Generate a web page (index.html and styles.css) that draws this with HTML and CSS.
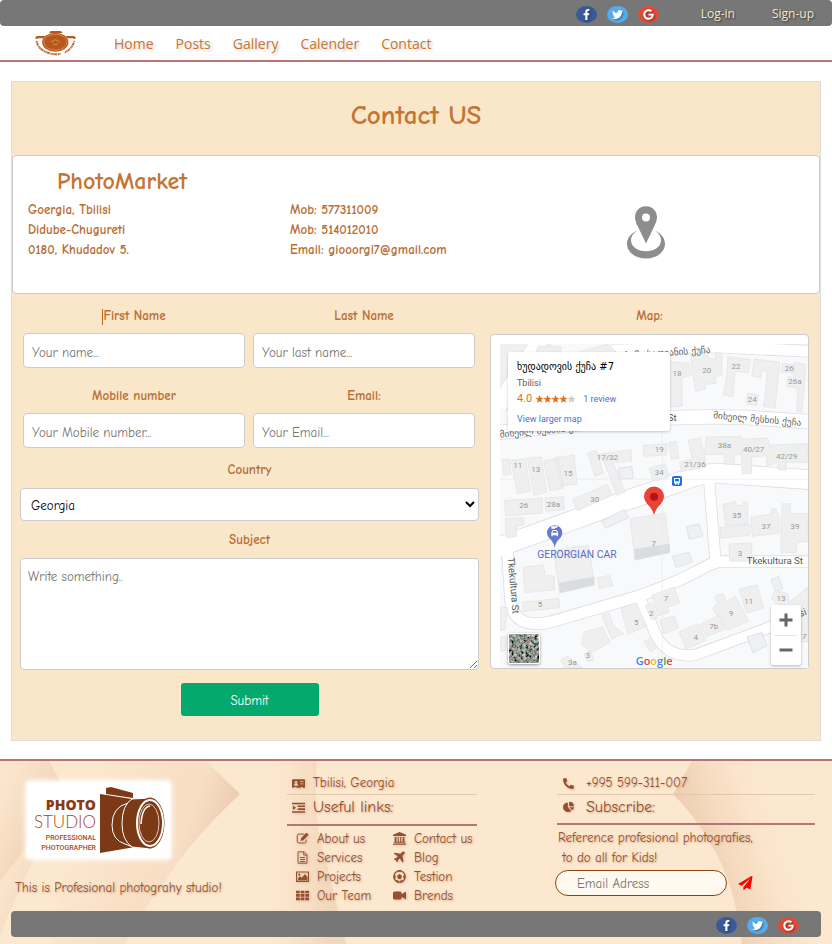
FILE: index.html
```html
<!DOCTYPE html>
<html lang="en">
<head>
<meta charset="utf-8">
<meta name="viewport" content="width=device-width, initial-scale=1">
<title>PhotoMarket - Contact</title>
<link rel="stylesheet" href="styles.css">
</head>
<body>
<svg class="defs" width="0" height="0" aria-hidden="true">
  <symbol id="i-fb" viewBox="0 0 320 512"><path d="M279.14 288l14.22-92.66h-88.91v-60.13c0-25.35 12.42-50.06 52.24-50.06h40.42V6.26S260.43 0 225.36 0c-73.22 0-121.08 44.38-121.08 124.72v70.62H22.89V288h81.39v224h100.17V288z"/></symbol>
  <symbol id="i-tw" viewBox="0 0 512 512"><path d="M459.37 151.716c.325 4.548.325 9.097.325 13.645 0 138.72-105.583 298.558-298.558 298.558-59.452 0-114.68-17.219-161.137-47.106 8.447.974 16.568 1.299 25.34 1.299 49.055 0 94.213-16.568 130.274-44.832-46.132-.975-84.792-31.188-98.112-72.772 6.498.974 12.995 1.624 19.818 1.624 9.421 0 18.843-1.3 27.614-3.573-48.081-9.747-84.143-51.98-84.143-102.985v-1.299c13.969 7.797 30.214 12.67 47.431 13.319-28.264-18.843-46.781-51.005-46.781-87.391 0-19.492 5.197-37.36 14.294-52.954 51.655 63.675 129.3 105.258 216.365 109.807-1.624-7.797-2.599-15.918-2.599-24.04 0-57.828 46.782-104.934 104.934-104.934 30.213 0 57.502 12.67 76.67 33.137 23.715-4.548 46.456-13.32 66.599-25.34-7.798 24.366-24.366 44.833-46.132 57.827 21.117-2.273 41.584-8.122 60.426-16.243-14.292 20.791-32.161 39.308-52.628 54.253z"/></symbol>
  <symbol id="i-gg" viewBox="0 0 488 512"><path d="M488 261.8C488 403.3 391.1 504 248 504 110.8 504 0 393.2 0 256S110.8 8 248 8c66.8 0 123 24.5 166.3 64.9l-67.5 64.9C258.5 52.6 94.3 116.6 94.3 256c0 86.5 69.1 156.6 153.7 156.6 98.2 0 135-70.4 140.8-106.9H248v-85.3h236.1c2.3 12.7 3.9 24.9 3.9 41.4z"/></symbol>
</svg>

<header>
  <div class="bar topbar">
    <div class="social">
      <a class="fb" href="#" aria-label="Facebook"><svg><use href="#i-fb"/></svg></a>
      <a class="tw" href="#" aria-label="Twitter"><svg><use href="#i-tw"/></svg></a>
      <a class="gg" href="#" aria-label="Google"><svg><use href="#i-gg"/></svg></a>
    </div>
    <a class="auth" href="#">Log-in</a>
    <a class="auth" href="#">Sign-up</a>
  </div>
  <nav class="nav">
    <a class="brand" href="#" aria-label="Home page">
      <svg viewBox="0 0 123 76" fill="#b8591c">
        <path d="M43 4Q45 0 50 0H74Q79 0 82 4V6H43z"/>
        <path d="M0 22Q0 15 8 15H31L24 22H10L3 24zM123 22Q123 15 115 15H92L99 22H113L120 24z"/>
        <ellipse cx="61" cy="34" rx="40" ry="29"/>
        <ellipse cx="61" cy="34" rx="35" ry="24" fill="none" stroke="#eab68c" stroke-width="1.5"/>
        <path d="M48 34Q61 20 74 34M54 39Q61 44 68 39" fill="none" stroke="#e9a777" stroke-width="2"/>
        <path d="M4 30Q9 64 60 71Q107 70 119 30" fill="none" stroke="#c0703c" stroke-width="6" stroke-dasharray="5 1 9 2 4 1"/>
        <path d="M78 62L90 61L86 72L76 75z" fill="#fff"/>
      </svg>
    </a>
    <a href="#">Home</a>
    <a href="#">Posts</a>
    <a href="#">Gallery</a>
    <a href="#">Calender</a>
    <a href="#">Contact</a>
  </nav>
</header>

<main class="contact">
  <h1>Contact US</h1>
  <section class="info">
    <div class="address">
      <h2>PhotoMarket</h2>
      <p>Goergia, Tbilisi</p>
      <p>Didube-Chugureti</p>
      <p>0180, Khudadov 5.</p>
    </div>
    <div class="phones">
      <p>Mob: 577311009</p>
      <p>Mob: 514012010</p>
      <p>Email: giooorgi7@gmail.com</p>
    </div>
    <div class="pin">
      <svg viewBox="0 0 114 158" fill="#8d8d8b">
        <path fill-rule="evenodd" d="M57 0C38 0 24 14 24 33C24 42 29 54 33 62L57 112L81 62C85 54 90 42 90 33C90 14 76 0 57 0zM57 22a12 12 0 1 1 0 24a12 12 0 1 1 0-24z"/>
        <path d="M30 74C12 81 0 96 0 113C0 138 25 157 57 157C89 157 114 138 114 113C114 96 102 81 84 74C96 81 102 91 102 102C102 121 82 135 57 135C32 135 12 121 12 102C12 91 18 81 30 74z"/>
      </svg>
    </div>
  </section>

  <div class="columns">
    <form class="form">
      <div class="pair">
        <div class="field"><label for="fname"><span class="caret"></span>First Name</label><input id="fname" type="text" placeholder="Your name..."></div>
        <div class="field"><label for="lname">Last Name</label><input id="lname" type="text" placeholder="Your last name..."></div>
        <div class="field"><label for="mobile">Mobile number</label><input id="mobile" type="tel" placeholder="Your Mobile number..."></div>
        <div class="field"><label for="email">Email:</label><input id="email" type="email" placeholder="Your Email..."></div>
      </div>
      <label for="country">Country</label>
      <select id="country"><option>Georgia</option></select>
      <label for="subject">Subject</label>
      <textarea id="subject" placeholder="Write something.."></textarea>
      <button class="submit" type="submit">Submit</button>
    </form>

    <section class="mapcol">
      <h3>Map:</h3>
      <div class="mapbox">
        <div class="map">
          <svg class="canvas" viewBox="45 57 926 972" preserveAspectRatio="xMinYMin slice" aria-label="Street map">
            <rect x="45" y="57" width="1200" height="1200" fill="#f8f9fb"/>
            <path d="M45 57H205L130 150L45 220z" fill="#f0f0f0"/>
            <g class="road edge">
              <path d="M168 40L40 245" stroke-width="54"/>
              <path d="M380 76L700 66L1000 80" stroke-width="38"/>
              <path d="M30 324L300 295Q560 270 780 277L1000 292" stroke-width="46"/>
              <path d="M30 670L230 598L400 535L600 465Q660 440 720 446L1000 466" stroke-width="62"/>
              <path d="M672 460L692 715" stroke-width="36"/>
              <path d="M1000 710H710Q690 708 630 742Q560 780 455 815L200 890Q95 915 78 840L66 660" stroke-width="38"/>
              <path d="M463 815L515 935Q550 1000 630 990L860 905L1000 850" stroke-width="36"/>
            </g>
            <g class="road">
              <path d="M168 40L40 245" stroke-width="49"/>
              <path d="M380 76L700 66L1000 80" stroke-width="33"/>
              <path d="M30 324L300 295Q560 270 780 277L1000 292" stroke-width="41"/>
              <path d="M30 670L230 598L400 535L600 465Q660 440 720 446L1000 466" stroke-width="57"/>
              <path d="M672 460L692 715" stroke-width="31"/>
              <path d="M1000 710H710Q690 708 630 742Q560 780 455 815L200 890Q95 915 78 840L66 660" stroke-width="33"/>
              <path d="M463 815L515 935Q550 1000 630 990L860 905L1000 850" stroke-width="31"/>
            </g>
            <g class="bld">
              <path d="M160 62L230 66L225 90H150zM300 75L370 57L400 90H260z"/>
              <path d="M545 110L612 114L618 152L590 158L592 243L556 247z"/>
              <path d="M617 85L668 79L670 100L692 102V82L711 85V150L690 156L692 175L660 178L662 192L632 198L622 140z"/>
              <path d="M728 95L796 103L790 142L750 139L744 215L715 210L727 140z"/>
              <path d="M808 102L885 112L870 250L836 244L848 140L830 136L828 158L800 153z"/>
              <path d="M893 115L925 120V144L890 141zM908 155L925 157L928 112L960 118V165L950 262L935 258L938 190L905 184z"/>
              <path d="M788 204L820 210L816 242L785 236z"/>
              <path d="M52 404L73 402L78 448L56 451zM78 406L122 401L136 498L97 506zM127 400L169 396L185 502L147 511zM176 408L219 400L235 490L194 497zM210 398L268 390L276 478L228 482z"/>
              <path d="M308 384L334 376L356 444L330 454zM340 388L438 374L440 409L384 412L420 500L396 511L358 413z"/>
              <path d="M400 430L440 424L445 460L405 462z" class="soft"/>
              <path d="M474 361L545 356V390L476 394zM550 352L574 349L582 400L560 403z"/>
              <path d="M492 430L540 416L553 456L506 470zM609 346L646 338L660 400L663 426L588 440L584 412L622 402z"/>
              <path d="M664 336L768 334L772 342L849 340L852 360L970 356V412H903V436L880 434V412L846 422L844 392L800 396V446H771L770 388L748 390V418L720 416L718 388L658 388z"/>
              <path d="M58 527L172 519V565L62 572zM180 519L236 515L238 554L182 559zM262 524L366 478L383 510L278 557z"/>
              <path d="M60 580L116 578V600L94 604V635L64 638z"/>
              <path d="M350 588L418 553L430 578L362 610zM605 605L642 597L654 633L612 643z" class="soft"/>
              <path d="M435 581L541 565L554 680L450 705z"/>
              <path d="M448 672L554 656V684L449 706z" class="shade"/>
              <path d="M205 675L311 661L329 780L224 804z"/>
              <path d="M222 773L328 755V780L224 804z" class="shade"/>
              <path d="M562 694L613 682L622 711L574 727z" class="soft"/>
              <path d="M114 727L176 719L180 750L208 753V795L120 803zM336 758L374 751L383 782L344 791zM112 832L222 820L224 848L114 860z"/>
              <path d="M713 538L752 530L754 542L775 540V530L788 532V596L722 602zM705 608L795 598V630L707 640z"/>
              <path d="M797 577L858 567L860 552H872L882 574V624L802 634zM892 536H916V565L970 566V650L934 652V682L888 684V600zM732 657L800 654V708H734z"/>
              <path d="M858 765L880 755L893 790L872 799z" class="soft"/>
              <path d="M762 792L817 780L836 850L784 864zM690 813L714 805L724 830L752 814L790 888L728 916L704 884L682 850L698 835z"/>
              <path d="M646 898L702 870L720 912L664 935zM582 920L640 896L662 946L604 972z"/>
              <path d="M500 811L566 786L584 832L546 848L552 862L520 872zM524 885L568 872L580 910L536 926zM480 842L500 833L518 880L500 885zM408 850L452 832L486 904L428 928z"/>
              <path d="M350 870L372 864L386 902L416 926L380 942zM298 920L352 906L376 952L312 986L306 968L290 960zM476 950L500 938L516 968L496 980zM228 1005L250 994L294 1029H240zM297 986L318 980L326 1004L308 1010z"/>
              <path d="M786 936L830 922L846 962L804 984z" class="soft"/>
              <path d="M858 820L872 795L910 808V832L970 786V860H905zM45 845L68 848L60 916H45zM45 935H62V978H45zM948 875L970 860V950H948z"/>
            </g>
            <path d="M532 300V1029M45 463H971" stroke="#e9ebee" stroke-width="2"/>
            <g class="num">
              <text x="576" y="154">18</text><text x="665" y="143">20</text><text x="753" y="133">22</text><text x="913" y="137">26</text><text x="930" y="178">26a</text><text x="802" y="232">24</text>
              <text x="98" y="429">11</text><text x="152" y="441">13</text><text x="249" y="452">15</text><text x="367" y="406">17/32</text><text x="523" y="380">19</text><text x="523" y="449">34</text><text x="630" y="427">21/36</text><text x="718" y="369">38a</text><text x="806" y="380">40/27</text><text x="905" y="403">42/29</text>
              <text x="116" y="549">26</text><text x="205" y="547">28a</text><text x="329" y="532">30</text><text x="506" y="663">7</text><text x="755" y="580">35</text><text x="843" y="613">37</text><text x="930" y="613">39</text><text x="765" y="692">3</text>
              <text x="165" y="847">5</text><text x="543" y="827">7</text><text x="499" y="873">2</text><text x="454" y="899">5</text><text x="632" y="944">4</text><text x="686" y="912">7b</text><text x="738" y="874">9</text><text x="791" y="838">11</text><text x="888" y="827">13</text><text x="308" y="1000">3</text><text x="262" y="1020">3a</text><text x="958" y="942">7</text>
            </g>
            <g class="street">
              <text x="384" y="104" transform="rotate(-4 384 104)">შურამ ასათიანის ქუჩა</text>
              <text x="684" y="280" transform="rotate(5 684 280)">მიხეილ მესხის ქუჩა</text>
              <text x="45" y="338" transform="rotate(-5 45 338)">მიხეილ მესხის ქ.</text>
            </g>
            <g class="latin">
              <text x="548" y="287">St</text>
              <text x="785" y="716">Tkekultura St</text>
              <text x="68" y="698" transform="rotate(85 68 698)">Tkekultura St</text>
              <text x="946" y="876" transform="rotate(-20 946 876)">si</text>
            </g>
            <text class="car" x="157" y="700">GERORGIAN CAR</text>
            <path d="M209 668Q206 650 192 639A23 23 0 1 1 226 639Q212 650 209 668z" fill="#6878cb"/>
            <path fill-rule="evenodd" d="M199 634V623L203 615H215L219 623V634H215V631H203V634zM204 618L202 623H216L214 618zM199 604H210L212 602H217V608H212L210 607V611H199z" fill="#fff"/>
            <rect x="561" y="453" width="30" height="30" rx="5" fill="#1a73e8"/>
            <path d="M567 459H585V475H582V479H578V475H574V479H570V475H567z" fill="#fff"/><path d="M570 462H582V469H570z" fill="#1a73e8"/>
            <path d="M507 570Q503 552 486 536A30 30 0 1 1 528 536Q511 552 507 570z" fill="#ea4335"/>
            <circle cx="507" cy="515" r="12" fill="#b31412"/>
            <text class="google" x="452" y="1019"><tspan fill="#4285f4">G</tspan><tspan fill="#ea4335">o</tspan><tspan fill="#fbbc05">o</tspan><tspan fill="#4285f4">g</tspan><tspan fill="#34a853">l</tspan><tspan fill="#ea4335">e</tspan></text>
          </svg>
          <div class="place">
            <b>ხუდადოვის ქუჩა #7</b>
            <span>Tbilisi</span>
            <div class="rating">4.0
              <svg viewBox="0 0 60 12" fill="#e7711b"><defs><path id="star" d="M6 0L7.700 4.200L12 4.500L8.700 7.200L9.800 11.500L6 9.200L2.200 11.500L3.300 7.200L0 4.500L4.300 4.200z"/></defs><use href="#star"/><use href="#star" x="12"/><use href="#star" x="24"/><use href="#star" x="36"/><use href="#star" x="48" fill="#ccc"/></svg>
              <a href="#">1 review</a>
            </div>
            <a href="#">View larger map</a>
          </div>
          <button class="sat" type="button" aria-label="Satellite view">
            <svg viewBox="0 0 30 28"><filter id="noise" x="0" y="0" width="1" height="1"><feTurbulence type="fractalNoise" baseFrequency=".35" numOctaves="3" seed="7"/><feColorMatrix values="1.3 .4 0 0 -.58 1 .7 0 0 -.56 1 .6 .1 0 -.59 0 0 0 0 1"/></filter><rect width="30" height="28" filter="url(#noise)"/></svg>
          </button>
          <div class="zoom">
            <button type="button" aria-label="Zoom in"><svg viewBox="0 0 14 14"><path d="M5.500 0.500h3v5h5v3h-5v5h-3v-5h-5v-3h5z"/></svg></button>
            <button type="button" aria-label="Zoom out"><svg viewBox="0 0 14 14"><path d="M.5 5.500h13v3h-13z"/></svg></button>
          </div>
        </div>
      </div>
    </section>
  </div>
</main>

<footer class="footer">
  <svg class="waves" viewBox="0 0 832 183" preserveAspectRatio="none" aria-hidden="true">
    <defs>
      <linearGradient id="g1" gradientUnits="userSpaceOnUse" x1="90" y1="20" x2="232" y2="70"><stop offset="0" stop-color="#f0d0b2" stop-opacity="0"/><stop offset=".7" stop-color="#f4d8bd" stop-opacity=".6"/><stop offset="1" stop-color="#ebc8aa"/></linearGradient>
      <linearGradient id="g2" gradientUnits="userSpaceOnUse" x1="0" y1="0" x2="70" y2="30"><stop offset="0" stop-color="#f4d8bd" stop-opacity="0"/><stop offset="1" stop-color="#efd0b3"/></linearGradient>
      <linearGradient id="g3" gradientUnits="userSpaceOnUse" x1="275" y1="0" x2="330" y2="0"><stop offset="0" stop-color="#f4d8bd" stop-opacity="0"/><stop offset="1" stop-color="#f2d7bc"/></linearGradient>
      <linearGradient id="g4" gradientUnits="userSpaceOnUse" x1="683" y1="65" x2="765" y2="35"><stop offset="0" stop-color="#edccae"/><stop offset="1" stop-color="#f4d8bd" stop-opacity="0"/></linearGradient>
      <linearGradient id="g5" gradientUnits="userSpaceOnUse" x1="0" y1="90" x2="60" y2="110"><stop offset="0" stop-color="#f4d8bd" stop-opacity="0"/><stop offset="1" stop-color="#f0d1b4"/></linearGradient>
    </defs>
    <path fill="url(#g1)" d="M80 0H206L240 33Q190 80 165 120Q135 160 125 183H50z"/>
    <path fill="url(#g2)" d="M0 0H49L68 34L0 120z"/>
    <path fill="url(#g5)" d="M0 60L65 40Q25 110 0 175z"/>
    <path fill="url(#g3)" d="M275 0H317Q312 60 325 95Q336 140 346 183H275z"/>
    <path fill="url(#g4)" d="M692 0H832V183H742Q735 120 710 82Q695 55 673 33z"/>
  </svg>

  <div class="footgrid">
    <div class="about">
      <svg class="studio" viewBox="0 0 143 76" role="img" aria-label="Photo Studio">
        <g text-anchor="end">
          <text class="s1" x="69" y="28">PHOTO</text>
          <text class="s2" x="69" y="46">STUDIO</text>
          <text class="s3" x="69" y="58">PROFESSIONAL</text>
          <text class="s3" x="69" y="68">PHOTOGRAPHER</text>
        </g>
        <g fill="#7c3915" transform="translate(-2 -2)">
          <path d="M75 14L107 19L110 67L75 73z"/>
          <path d="M81 8L86 7L108 13V18L81 14z"/>
          <path d="M103 23Q87 27 87 45Q87 60 100 64Q118 72 125 66L128 20Q115 17 103 23z" stroke="#fff"/>
          <path d="M107 19L126 18V69L107 67Q97 60 97 44Q97 25 107 19z" stroke="#fff"/>
          <ellipse cx="125" cy="43" rx="14" ry="25" stroke="#7c3915"/>
          <ellipse cx="125" cy="43" rx="13" ry="23" fill="none" stroke="#fff" stroke-width="2"/>
          <ellipse cx="124" cy="43" rx="10" ry="19" fill="none" stroke="#e8c3ad"/>
          <path d="M116 44Q117 27 125 26" fill="none" stroke="#fff" stroke-width="1.500"/>
        </g>
      </svg>
      <p>This is Profesional photograhy studio!</p>
    </div>

    <div class="links">
      <p class="line"><svg class="ic" viewBox="0 0 18 16"><path fill-rule="evenodd" d="M1 2h16q1 0 1 1v10q0 1-1 1h-2v-1h-3v1H6v-1H3v1H1q-1 0-1-1V3q0-1 1-1zM5.500 4.500a2 2 0 1 0 .1 0zM2.500 11h6q0-3-3-3t-3 3zM11 5v1h5V5zM11 8v1h5V8z"/></svg>Tbilisi, Georgia</p>
      <h4><svg class="ic" viewBox="0 0 16 16"><path d="M0 2h16v2H0zM7 5.500h9v2H7zM7 9h9v2H7zM0 12.500h16v2H0zM1 5.500L5 8.250L1 11z"/></svg>Useful links:</h4>
      <ul>
        <li><a href="#"><svg class="ic" viewBox="0 0 16 16"><path d="M10.500 2.500H3.500Q1.500 2.500 1.500 4.500v7q0 2 2 2h7q2 0 2-2V9.500" fill="none" stroke="#94502f" stroke-width="1.200"/><path d="M5.500 11l.8-3.500L13 1L15.500 3.500L9 10.200z"/></svg>About us</a></li>
        <li><a href="#"><svg class="ic" viewBox="0 0 16 16"><path d="M8 0L16 3.500V5H0V3.500zM2 6h2.200v6H5.800V6H7.200v6H8.800V6h1.400v6h1.600V6H14v6h1v1.300H1V12h1zM0 14h16v1.600H0z"/></svg>Contact us</a></li>
        <li><a href="#"><svg class="ic" viewBox="0 0 16 16"><path d="M2.500 1H10l3.500 3.500V15h-11zM9.500 1v4h4M5 8h6M5 10.500h6M5 13h6" fill="none" stroke="#94502f" stroke-width="1.200"/></svg>Services</a></li>
        <li><a href="#"><svg class="ic" viewBox="0 0 16 16"><path d="M14 1q1 1 0 2.500L11.500 6L13 13l-1.500 1L8.500 9L6 11.500V13l-1 1l-1.500-2.500L1 10l1-1h1.500L6 6.500L1 3.500L2 2l7 1.500L11.500 1Q13 0 14 1z"/></svg>Blog</a></li>
        <li><a href="#"><svg class="ic" viewBox="0 0 16 16"><path d="M.7 2.500h14.600v11.500H.7z" fill="none" stroke="#94502f" stroke-width="1.400"/><path d="M2.500 12.500V10L5 7.500l2 2L11 5l3 3.500v4zM4 4.200a1.300 1.300 0 1 0 .1 0z"/></svg>Projects</a></li>
        <li><a href="#"><svg class="ic" viewBox="0 0 16 16"><circle cx="8" cy="8" r="7" fill="none" stroke="#94502f" stroke-width="1.500"/><path d="M8 5l3 2.200L9.800 11H6.200L5 7.200zM5.500 1L8 2.500L10.500 1V0h-5zM1 6l2.500 1L3 10L1 11zM15 6l-2.500 1l.5 3l2 1zM4.500 12.500L7 13v3L3 14zM11.500 12.500L9 13v3l4-2z"/></svg>Testion</a></li>
        <li><a href="#"><svg class="ic" viewBox="0 0 16 16"><path d="M0 2h4.600v3.300H0zM5.700 2h4.600v3.300H5.700zM11.400 2H16v3.300h-4.600zM0 6.300h4.600v3.300H0zM5.700 6.300h4.600v3.300H5.700zM11.400 6.300H16v3.300h-4.600zM0 10.600h4.600v3.300H0zM5.700 10.600h4.600v3.300H5.700zM11.400 10.600H16v3.300h-4.600z"/></svg>Our Team</a></li>
        <li><a href="#"><svg class="ic" viewBox="0 0 16 16"><path d="M2 3h6.500q2 0 2 2v1.500L16 3v10l-5.500-3.500V11q0 2-2 2H2q-2 0-2-2V5q0-2 2-2z"/></svg>Brends</a></li>
      </ul>
    </div>

    <div class="subscribe">
      <p class="line"><svg class="ic" viewBox="0 0 512 512"><path transform="translate(512 0) scale(-1 1)" d="M493.400 24.600l-104-24c-11.300-2.600-22.900 3.300-27.500 13.900l-48 112c-4.200 9.800-1.400 21.300 6.900 28l60.600 49.600c-36 76.700-98.900 140.500-177.200 177.200l-49.600-60.600c-6.800-8.300-18.200-11.100-28-6.900l-112 48C3.900 366.500-2 378.100.6 389.400l24 104C27.100 504.200 36.700 512 48 512c256.100 0 464-207.500 464-464 0-11.200-7.700-20.900-18.600-23.400z" class="phone"/></svg>+995 599-311-007</p>
      <h4><svg class="ic" viewBox="0 0 16 16"><path d="M7 2v7l5 5A7 7 0 1 1 7 2zM9 1a7 7 0 0 1 7 6.500H9zM9 9h7a7 7 0 0 1-2.500 4.500z"/></svg>Subscribe:</h4>
      <p class="note">Reference profesional photografies,</p>
      <p class="note">&nbsp;to do all for Kids!</p>
      <form class="mail">
        <input type="email" placeholder="Email Adress" aria-label="Email Adress">
        <button type="submit" aria-label="Send"><svg viewBox="0 0 512 512"><path d="M476 3.200L12.500 270.600c-18.100 10.400-15.800 35.600 2.200 43.200L121 358.400l287.300-253.200c5.500-4.900 13.300 2.600 8.600 8.300L176 407v80.500c0 23.600 28.500 32.900 42.500 15.800L282 426l124.600 52.200c14.200 6 30.400-2.900 33-18.200l72-432C515 7.800 493.300-6.800 476 3.200z"/></svg></button>
      </form>
    </div>
  </div>

  <div class="bar footbar">
    <div class="social">
      <a class="fb" href="#" aria-label="Facebook"><svg><use href="#i-fb"/></svg></a>
      <a class="tw" href="#" aria-label="Twitter"><svg><use href="#i-tw"/></svg></a>
      <a class="gg" href="#" aria-label="Google"><svg><use href="#i-gg"/></svg></a>
    </div>
  </div>
</footer>
</body>
</html>
```
FILE: styles.css
```css
* { box-sizing: border-box; }
body {
  margin: 0;
  background: #fff;
  font-family: "Comic Sans MS", "Comic Neue", Lato, sans-serif;
  font-size: 13px;
  line-height: 20px;
  color: #b86f35;
}
h1, h2, h3, h4, p, ul { margin: 0; padding: 0; font-weight: inherit; }
a { color: inherit; text-decoration: none; }
button, input, select, textarea { font: inherit; }
svg { display: block; }
.defs { position: absolute; }

/* Grey bars */
.bar {
  display: flex;
  align-items: center;
  justify-content: flex-end;
  height: 26px;
  border-radius: 4px;
  background: #777;
}
.topbar { padding: 2px 18px 0 0; font-family: "Segoe UI", "Open Sans", sans-serif; font-size: 12px; color: #fae6c9; }
.auth { margin-left: 37px; text-shadow: 1px 1px 2px #333; }
.topbar .social { margin-right: 5px; }
.social { display: flex; gap: 10px; }
.social a {
  display: flex;
  align-items: center;
  justify-content: center;
  width: 21px;
  height: 17px;
  border-radius: 50%;
}
.social svg { width: 11px; height: 11px; fill: #fff; filter: drop-shadow(1px 1px 1px #0006); }
.fb { background: #3b5998; }
.tw { background: #55acee; }
.gg { background: #dd4b39; }

/* Navigation */
.nav {
  display: flex;
  align-items: center;
  gap: 22px;
  height: 36px;
  padding: 1px 0 0 35px;
  border-bottom: 2px solid #b87474;
  font-family: "Segoe UI", "Open Sans", sans-serif;
  font-size: 14px;
  color: #c8762f;
}
.nav a { text-shadow: 2px 2px 3px #0003; }
.brand { margin-right: 16px; }
.brand svg { width: 41px; height: 25px; }

/* Contact panel */
.contact {
  margin: 19px 11px 18px;
  border: 1px solid #ddd;
  background: #fae6c9;
}
h1 { padding: 18px 0 23px; font-size: 27px; line-height: 32px; font-weight: bold; text-align: center; color: #c47532; }
.info {
  display: grid;
  grid-template-columns: 262px 1fr 346px;
  min-height: 139px;
  padding: 9px 0 0 15px;
  border: 1px solid #ccc;
  border-radius: 4px;
  background: #fff;
  font-weight: bold;
}
h2 { padding-left: 29px; margin-bottom: 3px; font-size: 24px; line-height: 32px; font-weight: bold; color: #c47532; }
.phones { padding-top: 35px; }
.pin { display: flex; justify-content: center; padding: 41px 0 0; }
.pin svg { width: 38px; height: 53px; }

.columns { display: grid; grid-template-columns: 459fr 319fr; gap: 11px; padding: 12px 11px 24px 8px; }
.form { display: flex; flex-direction: column; }
.form label, h3 { display: block; font-size: 13px; line-height: 20px; font-weight: bold; text-align: center; }
.pair { display: grid; grid-template-columns: 1fr 1fr; gap: 18px 8px; padding: 0 4px 0 3px; margin-bottom: 12px; }
.field label { margin-bottom: 7px; }
.caret { display: inline-block; height: 16px; border-left: 1px solid #b8642b; vertical-align: middle; }
.form input, .form select, .form textarea {
  display: block;
  width: 100%;
  border: 1px solid #ccc;
  border-radius: 4px;
  background: #fff;
  color: #000;
}
.form input { height: 35px; padding: 3px 8px 0; }
.form select { height: 33px; margin: 8px 0 9px; padding: 2px 6px 0; }
.form textarea { height: 112px; margin-top: 8px; padding: 8px 7px; resize: vertical; }
::placeholder { color: #757575; opacity: 1; }
.submit {
  align-self: center;
  width: 138px;
  height: 33px;
  margin-top: 13px;
  padding: 2px 0 0;
  border: 0;
  border-radius: 3px;
  background: #04aa6d;
  color: #fff;
}

/* Map */
.mapcol { display: flex; flex-direction: column; }
.mapbox {
  height: 335px;
  margin-top: 8px;
  padding: 9px 0 0 9px;
  border: 1px solid #ccc;
  border-radius: 4px;
  background: #fff;
}
.map { position: relative; height: 100%; overflow: hidden; font-family: Roboto, sans-serif; }
.canvas { width: 100%; height: 100%; }
.road path { fill: none; stroke: #fff; }
.road.edge path { stroke: #dcdfe5; }
.bld path { fill: #efefef; stroke: #e1e2e4; stroke-width: 2; }
.bld .soft { fill: #eef0f4; stroke: #d5d8dd; }
.bld .shade { fill: #dadde0; stroke: none; }
.num { font-size: 24px; fill: #999; text-anchor: middle; }
.street { font-family: "DejaVu Sans", sans-serif; font-size: 28px; fill: #666; }
.latin { font-size: 29px; fill: #555a60; }
.car { font-size: 31px; fill: #5c6bc0; }
.google { font-family: "Open Sans", sans-serif; font-size: 33px; font-weight: 600; }
.place {
  position: absolute;
  top: 8px;
  left: 8px;
  width: 162px;
  height: 79px;
  padding: 7px 9px;
  border-radius: 2px;
  background: #fff;
  box-shadow: 0 1px 3px #0003;
  font-size: 10px;
  line-height: 15px;
  color: #5b5b5b;
}
.place b { display: block; font: 10px/16px "DejaVu Sans", sans-serif; color: #000; white-space: nowrap; }
.place span { display: block; line-height: 17px; font-size: 9px; }
.place a { font-size: 9px; color: #4272db; }
.rating { display: flex; align-items: center; gap: 3px; margin-bottom: 5px; font-size: 11px; line-height: 14px; color: #e7711b; }
.rating svg { width: 41px; height: 8px; margin-right: 4px; }
.sat { position: absolute; left: 8px; bottom: 4px; width: 32px; height: 31px; padding: 0; border: 1px solid #fff; border-radius: 2px; box-shadow: 0 1px 3px #0006; overflow: hidden; }
.sat svg { width: 30px; height: 29px; }
.zoom { position: absolute; right: 7px; bottom: 3px; width: 30px; border-radius: 2px; background: #fff; box-shadow: 0 1px 3px #0004; }
.zoom button { display: flex; align-items: center; justify-content: center; width: 30px; height: 30px; padding: 0; border: 0; background: none; }
.zoom button + button::before { content: ""; position: absolute; top: 30px; left: 4px; right: 4px; border-top: 1px solid #e6e6e6; }
.zoom svg { width: 14px; height: 14px; fill: #666; }

/* Footer */
.footer { position: relative; border-top: 2px solid #b87474; background: #fce8cf; color: #94502f; padding: 0 11px 7px; }
.waves { position: absolute; inset: 0; width: 100%; height: 100%; }
.footgrid {
  position: relative;
  display: grid;
  grid-template-columns: 276px 190px 1fr;
  min-height: 150px;
  text-shadow: 1px 1px 2px #94502f66;
}
.about svg { width: 143px; height: 76px; margin: 21px 0 20px 16px; background: #fff; box-shadow: 0 0 5px 2px #fff; border-radius: 3px; text-shadow: none; }
.about p { padding-left: 4px; }
.studio .s1 { font-family: "Open Sans", sans-serif; font-size: 14px; font-weight: 800; fill: #8a3a12; }
.studio .s2 { font-family: Lato, sans-serif; font-size: 17px; font-weight: 300; fill: #a94a16; }
.studio .s3 { font-family: Roboto, sans-serif; font-size: 7px; font-weight: 500; fill: #a94a16; }
.ic { flex: none; width: 13px; height: 13px; fill: #94502f; filter: drop-shadow(1px 1px 1px #94502f44); }
.links, .subscribe { padding-top: 12px; }
.line { display: flex; align-items: center; gap: 8px; padding: 0 5px 1px; border-bottom: 1px solid #dfc9ae; }
h4 { display: flex; align-items: center; gap: 8px; height: 31px; padding: 0 5px 5px; border-bottom: 2px solid #b87474; font-size: 16px; }
ul { display: grid; grid-template-columns: 97px 1fr; padding: 3px 0 0 9px; list-style: none; line-height: 19px; }
li a { display: flex; align-items: center; gap: 8px; white-space: nowrap; }
.subscribe { padding-left: 80px; margin-right: 6px; }
.subscribe .ic { width: 11px; height: 11px; }
.subscribe .line, .subscribe h4 { gap: 12px; padding-left: 6px; }
.note { padding: 3px 0 0 1px; line-height: 17px; }
.subscribe h4 { height: 30px; margin-bottom: 1px; }
.mail { display: flex; align-items: center; gap: 11px; margin: 4px 0 0 -2px; }
.mail input { width: 172px; height: 26px; padding: 1px 21px; border: 1px solid #8b4513; border-radius: 13px; background: #fff9f0; }
.mail button { padding: 0; border: 0; background: none; }
.mail svg { width: 15px; height: 14px; fill: red; }
.footbar { position: relative; padding: 3px 22px 0 0; }
```
